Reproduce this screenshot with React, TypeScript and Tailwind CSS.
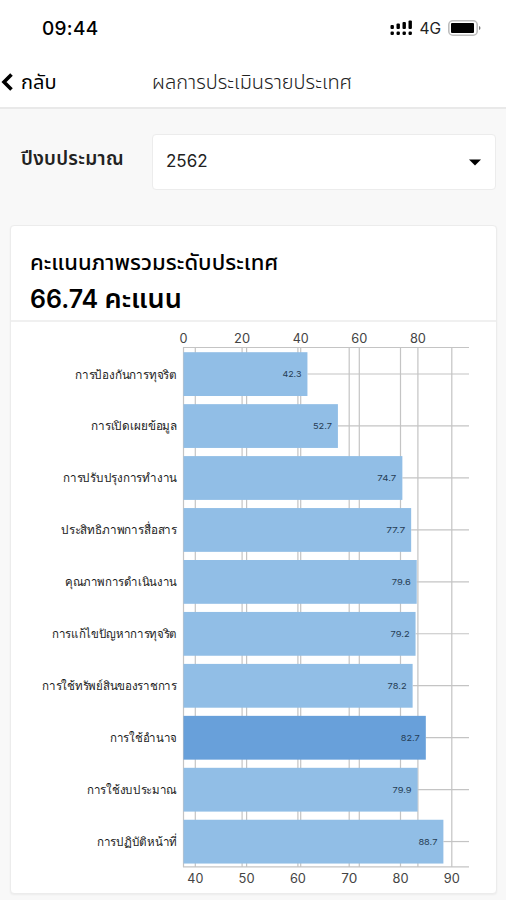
import React from "react";

interface Score {
  label: string;
  value: string;
  labelWidth: number;
  active?: boolean;
}

const scores: Score[] = [
  { label: "การป้องกันการทุจริต", value: "42.3", labelWidth: 102 },
  { label: "การเปิดเผยข้อมูล", value: "52.7", labelWidth: 86 },
  { label: "การปรับปรุงการทำงาน", value: "74.7", labelWidth: 114 },
  { label: "ประสิทธิภาพการสื่อสาร", value: "77.7", labelWidth: 116 },
  { label: "คุณภาพการดำเนินงาน", value: "79.6", labelWidth: 112 },
  { label: "การแก้ไขปัญหาการทุจริต", value: "79.2", labelWidth: 125 },
  { label: "การใช้ทรัพย์สินของราชการ", value: "78.2", labelWidth: 135 },
  { label: "การใช้อำนาจ", value: "82.7", labelWidth: 67, active: true },
  { label: "การใช้งบประมาณ", value: "79.9", labelWidth: 90 },
  { label: "การปฏิบัติหน้าที่", value: "88.7", labelWidth: 80 },
];

const topTicks = [0, 20, 40, 60, 80];
const bottomTicks = [40, 50, 60, 70, 80, 90];

const topX = (v: number) => 172.5 + v * 2.93;
const bottomX = (v: number) => 184.3 + (v - 40) * 5.13;

const StatusBar: React.FC = () => (
  <div className="flex h-14 items-center justify-between pl-[42px] pr-[25px]">
    <span className="pt-[2px] text-[19px] font-medium tracking-[0.3px]">09:44</span>
    <div className="flex items-center">
      <svg width="22" height="16" viewBox="0 0 22 16" className="mr-[7px]">
        {[0, 1, 2, 3].map((i) => (
          <g key={i}>
            <rect x={0.5 + i * 6} y={5 - i * 1.5} width="3.4" height={4 + i * 1.5} rx="1" />
            <rect x={0.5 + i * 6} y="11.5" width="3.4" height="3.5" rx="1.2" />
          </g>
        ))}
      </svg>
      <span className="mr-[7px] pt-[2px] text-[15.5px] text-[#222]">4G</span>
      <svg width="33" height="16" viewBox="0 0 33 16">
        <rect x="0.8" y="0.8" width="28.4" height="14.4" rx="4" fill="#fff" stroke="#bdbdbd" strokeWidth="1.6" />
        <rect x="3" y="3" width="23" height="10" rx="1" />
        <path d="M31 6v4q1.5-.6 1.5-2T31 6z" fill="#777" />
      </svg>
    </div>
  </div>
);

const ScoreChart: React.FC = () => (
  <svg width="485" height="571" viewBox="0 0 485 571" className="block">
    <g stroke="#c4c4c4" strokeWidth="1.2">
      {topTicks.map((t) => (
        <line key={t} x1={topX(t)} x2={topX(t)} y1="25" y2="545" />
      ))}
      {bottomTicks.map((t) => (
        <line key={t} x1={bottomX(t)} x2={bottomX(t)} y1="25" y2="545" />
      ))}
      <line x1="172" x2="458" y1="25.5" y2="25.5" />
      <line x1="172" x2="458" y1="544.8" y2="544.8" />
    </g>

    <g fontSize="12.5" fill="#444" textAnchor="middle">
      {topTicks.map((t) => (
        <text key={t} x={topX(t)} y="20.5" textLength={t ? 16 : 8} lengthAdjust="spacingAndGlyphs">{t}</text>
      ))}
      {bottomTicks.map((t) => (
        <text key={t} x={bottomX(t)} y="560.5" textLength="16" lengthAdjust="spacingAndGlyphs">{t}</text>
      ))}
    </g>

    {scores.map((s, i) => {
      const y = 30.2 + i * 51.95;
      const end = topX(Number(s.value));
      return (
        <g key={s.label}>
          <line x1={end} x2="458" y1={y + 21.8} y2={y + 21.8} stroke="#c4c4c4" strokeWidth="1.2" />
          <rect x="172.5" y={y} width={end - 172.5} height="43.8" fill={s.active ? "#68a0da" : "#91bee6"} />
          <text
            x={end - 6}
            y={y + 25}
            fontSize="8"
            fill="#263d55"
            textAnchor="end"
            textLength="19"
            lengthAdjust="spacingAndGlyphs"
          >
            {s.value}
          </text>
          <text
            x="166"
            y={y + 26.3}
            fontSize="12"
            fill="#222"
            textAnchor="end"
            textLength={s.labelWidth}
            lengthAdjust="spacingAndGlyphs"
            className="font-['Liberation_Serif',serif]"
          >
            {s.label}
          </text>
        </g>
      );
    })}
  </svg>
);

const App: React.FC = () => {
  return (
    <div className="flex h-[900px] w-[506px] flex-col overflow-hidden bg-[#f8f8f8] font-['Inter','Noto_Sans_Thai',sans-serif] text-black">
      <header className="h-[109px] border-b-2 border-[#e9e9e9] bg-white">
        <StatusBar />
        <div className="flex h-[50px] items-center pt-px">
          <button className="flex w-[152px] items-center gap-[8px] pl-px text-[20px]">
            <svg width="12" height="18" viewBox="0 0 12 18" fill="none" stroke="black" strokeWidth="3.6">
              <path d="M10.5 1.5L3 9l7.5 7.5" />
            </svg>
            กลับ
          </button>
          <h1 className="whitespace-nowrap text-[20px] font-light text-[#222]">
            ผลการประเมินรายประเทศ
          </h1>
        </div>
      </header>

      <main className="px-[10px] pt-[25px]">
        <div className="flex items-center">
          <label className="w-[142px] whitespace-nowrap pb-[5px] pl-[11px] text-[19px] font-semibold tracking-[0.3px] text-[#222]">
            ปีงบประมาณ
          </label>
          <div className="flex h-14 w-[344px] items-center justify-between rounded border border-[#ececec] bg-white pl-[13px] pr-[14px]">
            <span className="text-[17px] text-[#222]">2562</span>
            <svg width="12" height="7" viewBox="0 0 12 7">
              <path d="M0 .5h12L6 6.5z" />
            </svg>
          </div>
        </div>

        <section className="mt-[35px] h-[669px] w-[487px] rounded border border-[#ececec] bg-white shadow-xs">
          <div className="flex h-[96px] flex-col border-b-2 border-[#f0f0f0] pl-[19px] pt-[22px]">
            <h2 className="h-[32px] whitespace-nowrap text-[22px] font-medium leading-[28px] tracking-[0.05px]">
              คะแนนภาพรวมระดับประเทศ
            </h2>
            <p className="whitespace-nowrap text-[25px] font-semibold leading-[38px]">
              66.74 <span className="text-[27px]">คะแนน</span>
            </p>
          </div>
          <ScoreChart />
        </section>
      </main>
    </div>
  );
};

export default App;
